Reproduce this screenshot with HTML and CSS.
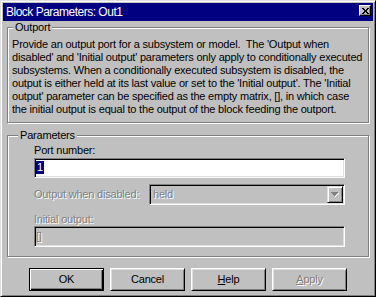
FILE: index.html
```html
<!DOCTYPE html>
<html lang="en">
<head>
  <meta charset="UTF-8">
  <title>Block Parameters: Out1</title>
  <link rel="stylesheet" href="styles.css">
</head>
<body>
  <div class="window">

    <!-- Barra de título -->
    <div class="titlebar">
      <span class="title">Block Parameters: Out1</span>
      <span class="close-btn">
        <svg width="7" height="6" viewBox="0 0 7 6" shape-rendering="crispEdges">
          <path d="M0 0h2v1h-2z M5 0h2v1h-2z M1 1h2v1h-2z M4 1h2v1h-2z M2 2h3v2h-3z M1 4h2v1h-2z M4 4h2v1h-2z M0 5h2v1h-2z M5 5h2v1h-2z" fill="#000"/>
        </svg>
      </span>
    </div>

    <!-- Descrição do bloco -->
    <div class="group group-outport">
      <div class="group-title">Outport</div>
      <p class="description">Provide an output port for a subsystem or model.&nbsp; The 'Output when<br>disabled' and 'Initial output' parameters only apply to conditionally executed<br>subsystems. When a conditionally executed subsystem is disabled, the<br>output is either held at its last value or set to the 'Initial output'. The 'Initial<br>output' parameter can be specified as the empty matrix, [], in which case<br>the initial output is equal to the output of the block feeding the outport.</p>
    </div>

    <!-- Parâmetros -->
    <div class="group group-params">
      <div class="group-title">Parameters</div>

      <div class="field-label">Port number:</div>
      <div class="edit edit-port"><span class="selected">1</span></div>

      <div class="combo-row">
        <div class="field-label combo-label disabled">Output when disabled:</div>
        <div class="combo">
          <span class="combo-value disabled">held</span>
          <span class="combo-btn">
            <svg width="8" height="5" viewBox="0 0 8 5" shape-rendering="crispEdges">
              <path d="M7 1h1v1h-1v1h-1v1h-1v1h-1v-1h1v-1h1v-1h1z" fill="#fff"/>
              <path d="M0 0h7v1h-1v1h-1v1h-1v1h-1v-1h-1v-1h-1v-1h-1z" fill="#808080"/>
            </svg>
          </span>
        </div>
      </div>

      <div class="field-label field-label-initial disabled">Initial output:</div>
      <div class="edit edit-initial"><span class="disabled">[]</span></div>
    </div>

    <!-- Botões -->
    <div class="buttons">
      <button class="btn btn-default">OK</button>
      <button class="btn">Cancel</button>
      <button class="btn"><u>H</u>elp</button>
      <button class="btn btn-disabled"><u>A</u>pply</button>
    </div>

  </div>
</body>
</html>
```

FILE: styles.css
```css
* {
  margin: 0;
  padding: 0;
  box-sizing: border-box;
}

body {
  font-family: 'Liberation Sans', Arial, sans-serif;
  font-size: 11px;
  line-height: 13px;
  letter-spacing: -0.2px;
  color: #000;
  background-color: #c0c0c0;
}

.window {
  width: 376px;
  height: 297px;
  padding: 2px;
  background-color: #c0c0c0;
  border: 1px solid;
  border-color: #dfdfdf #000 #000 #dfdfdf;
  box-shadow: inset 1px 1px #fff, inset -1px -1px #808080;
}

.titlebar {
  display: flex;
  justify-content: space-between;
  align-items: flex-start;
  height: 18px;
  padding-left: 3px;
  background-color: #000080;
  color: #fff;
}

.title {
  font-size: 12px;
  line-height: 18px;
  letter-spacing: -0.5px;
  white-space: nowrap;
}

.close-btn {
  display: flex;
  align-items: center;
  justify-content: center;
  width: 12px;
  height: 11px;
  margin: 2px 2px 0 0;
  background-color: #c0c0c0;
  border: 1px solid;
  border-color: #fff #000 #000 #fff;
  box-shadow: inset -1px -1px #808080;
}

.group {
  margin: 0 4px;
  border: 1px solid #808080;
  box-shadow: inset 1px 1px #fff, 1px 1px #fff;
}

.group-title {
  width: fit-content;
  margin: -7px 0 0 5px;
  padding: 0 2px;
  background-color: #c0c0c0;
  white-space: nowrap;
}

.group-outport {
  margin-top: 6px;
  padding-bottom: 6px;
}

.description {
  margin: 4px 0 0 4px;
  white-space: nowrap;
}

.group-params {
  margin-top: 12px;
  padding: 0 23px 9px 25px;
}

.group-params .group-title {
  margin-left: -15px;
}

.field-label {
  margin-top: 2px;
  margin-left: 1px;
  white-space: nowrap;
}

.disabled {
  color: #808080;
  text-shadow: 1px 1px #fff;
}

.edit {
  height: 20px;
  padding: 2px 0 0 1px;
  border: 1px solid;
  border-color: #808080 #fff #fff #808080;
  box-shadow: inset 1px 1px #000, inset -1px -1px #dfdfdf;
}

.edit-port {
  margin-top: 1px;
  margin-left: 1px;
  background-color: #fff;
}

.selected {
  display: inline-block;
  padding: 0 1px;
  background-color: #000080;
  color: #fff;
}

.combo-row {
  display: flex;
  align-items: center;
  margin-top: 6px;
  margin-left: 1px;
}

.combo-label {
  width: 115px;
  margin: 0;
}

.combo {
  flex: 1;
  display: flex;
  justify-content: space-between;
  align-items: center;
  height: 21px;
  padding: 1px 1px 1px 3px;
  border: 1px solid;
  border-color: #808080 #fff #fff #808080;
  box-shadow: inset 1px 1px #000, inset -1px -1px #dfdfdf;
}

.combo-btn {
  display: flex;
  align-items: center;
  justify-content: center;
  width: 16px;
  height: 17px;
  border: 1px solid;
  border-color: #dfdfdf #000 #000 #dfdfdf;
  box-shadow: inset 1px 1px #fff, inset -1px -1px #808080;
}

.field-label-initial {
  margin-top: 8px;
}

.edit-initial {
  height: 21px;
  margin-left: 1px;
  padding-top: 3px;
}

.buttons {
  display: flex;
  justify-content: center;
  gap: 6px;
  margin-top: 11px;
}

.btn {
  width: 75px;
  height: 23px;
  font: inherit;
  letter-spacing: inherit;
  color: #000;
  background-color: #c0c0c0;
  border: 1px solid;
  border-color: #fff #000 #000 #fff;
  box-shadow: inset 1px 1px #dfdfdf, inset -1px -1px #808080;
}

.btn-default {
  border-color: #000;
  box-shadow: inset 1px 1px #fff, inset -1px -1px #000, inset -2px -2px #808080;
}

.btn-disabled {
  color: #808080;
  text-shadow: 1px 1px #fff;
}

.btn u {
  text-underline-offset: 1px;
}
```
